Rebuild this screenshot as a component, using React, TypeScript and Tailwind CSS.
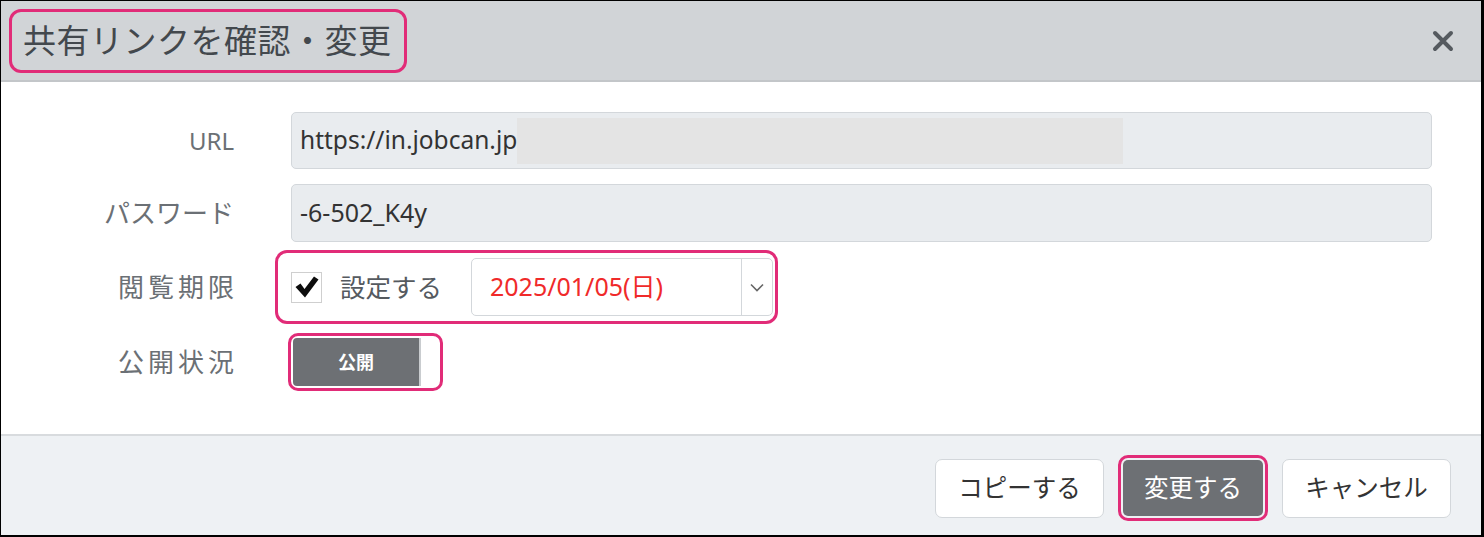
import React from "react";

const font = {
  fontFamily: '"Noto Sans", "Noto Sans CJK JP", sans-serif',
};

function CloseIcon() {
  return (
    <svg width="22" height="22" viewBox="0 0 22 22">
      <path
        d="M3 3 L19 19 M19 3 L3 19"
        stroke="#555a5f"
        strokeWidth="4"
        strokeLinecap="round"
      />
    </svg>
  );
}

function CheckMark() {
  return (
    <svg width="24" height="22" viewBox="0 0 24 22">
      <path d="M0.5 11 L5.5 7.5 L9.5 13 L19 0.5 L23.5 3.5 L10 21.5 Z" fill="#0d0d0d" />
    </svg>
  );
}

function Chevron() {
  return (
    <svg width="14" height="9" viewBox="0 0 14 9">
      <path
        d="M1 1.5 L7 7.5 L13 1.5"
        fill="none"
        stroke="#666"
        strokeWidth="1.6"
      />
    </svg>
  );
}

export default function App() {
  return (
    <div
      className="flex h-[537px] w-[1484px] flex-col border-t border-l border-r-[3px] border-b-2 border-black bg-white"
      style={font}
    >
      {/* header */}
      <div className="flex h-[81px] shrink-0 items-center justify-between border-b-2 border-[#c3c6c9] bg-[#d1d4d7] pl-[8px] pr-[27px]">
        <div className="flex h-[64px] items-center rounded-[12px] border-[3px] border-[#e12c78] pl-[11px] pr-[12px]">
          <h1 className="text-[33px] leading-none font-normal tracking-[0.5px] text-[#43484d]">
            共有リンクを確認・変更
          </h1>
        </div>
        <CloseIcon />
      </div>

      {/* body */}
      <div className="flex flex-1 flex-col pt-[30px]">
        <Row label="URL" labelClass="text-[24px]">
          <div className="relative flex h-[57px] w-[1141px] items-center rounded-[5px] border border-[#d3d7db] bg-[#e9ecef] pl-[8px]">
            <span className="text-[24.5px] text-[#333]">https://in.jobcan.jp</span>
            <div className="h-[46px] w-[606px] bg-[#e4e4e4]" />
          </div>
        </Row>

        <Row label="パスワード" labelClass="text-[26px]" className="mt-[15px]">
          <div className="flex h-[58px] w-[1141px] items-center rounded-[5px] border border-[#d3d7db] bg-[#e9ecef] pl-[8px]">
            <span className="text-[25px] text-[#333]">-6-502_K4y</span>
          </div>
        </Row>

        <Row label="閲覧期限" className="mt-[8px]">
          <div className="-ml-[16px] flex h-[74px] items-center rounded-[12px] border-[3px] border-[#e12c78] pl-[13px] pr-[2px]">
            <div className="flex h-[31px] w-[31px] items-center justify-center border border-[#cfcfcf] bg-white">
              <CheckMark />
            </div>
            <span className="ml-[18px] text-[25.5px] text-[#555a5f]">設定する</span>
            <div className="ml-[29px] flex h-[58px] w-[302px] items-center rounded-[5px] border border-[#d3d7db] bg-white">
              <span className="flex-1 pl-[18px] text-[25px] text-[#f02a2a]">
                2025/01/05(日)
              </span>
              <div className="flex h-full w-[31px] items-center justify-center border-l border-[#d3d7db]">
                <Chevron />
              </div>
            </div>
          </div>
        </Row>

        <Row label="公開状況" className="mt-[9px]">
          <div className="-ml-[3px] flex h-[58px] w-[155px] rounded-[10px] border-[3px] border-[#e12c78] p-[2px]">
            <div className="flex flex-1 overflow-hidden rounded-[4px] bg-white">
              <div className="flex w-[128px] items-center justify-center border-r-2 border-[#c9cccf] bg-[#6d7074]">
                <span className="text-[18px] font-bold text-white">公開</span>
              </div>
            </div>
          </div>
        </Row>
      </div>

      {/* footer */}
      <div className="flex h-[101px] shrink-0 items-center justify-end gap-[14px] border-t-2 border-[#d8dbde] bg-[#eef1f4] pt-[5px] pr-[30px]">
        <button className="h-[59px] w-[169px] rounded-[7px] border border-[#d3d7db] bg-white text-[24.5px] text-[#333]">
          コピーする
        </button>
        <div className="rounded-[10px] border-[3px] border-[#e12c78] p-[2px]">
          <button className="h-[56px] w-[140px] rounded-[5px] bg-[#6d7074] text-[24.5px] text-white">
            変更する
          </button>
        </div>
        <button className="h-[59px] w-[169px] rounded-[7px] border border-[#d3d7db] bg-white text-[24.5px] text-[#333]">
          キャンセル
        </button>
      </div>
    </div>
  );
}

function Row({
  label,
  labelClass = "text-[26px] tracking-[4px] -mr-[4px]",
  className = "",
  children,
}: {
  label: string;
  labelClass?: string;
  className?: string;
  children: React.ReactNode;
}) {
  return (
    <div className={`flex items-center ${className}`}>
      <div className="w-[233px] shrink-0 text-right">
        <span className={`inline-block text-[#6b7075] ${labelClass}`}>{label}</span>
      </div>
      <div className="ml-[57px] flex items-center">{children}</div>
    </div>
  );
}
